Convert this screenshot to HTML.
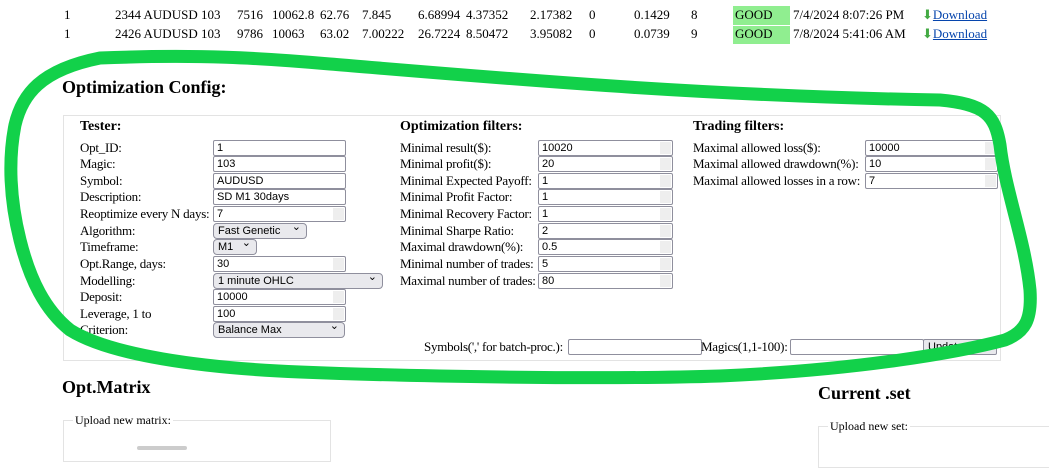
<!DOCTYPE html>
<html><head><meta charset="utf-8"><style>
body{margin:0;width:1049px;height:448px;overflow:hidden;background:#fff;font-family:"Liberation Serif",serif;font-size:13px;color:#000;position:relative}
.a{position:absolute;white-space:nowrap}
.t{position:absolute;white-space:nowrap;line-height:16px;letter-spacing:-0.25px}
.in{position:absolute;height:14px;border:1px solid #8f8f9d;border-radius:2px;font-family:"Liberation Sans",sans-serif;font-size:11px;line-height:14px;padding-left:3px;box-sizing:content-box;background:#fff}
.sp::after{content:"";position:absolute;right:1px;top:1px;width:11px;height:12px;background:#eee}
.sel{position:absolute;height:14px;border:1px solid #8f8f9d;border-radius:4px;background:#e9e9ed;font-family:"Liberation Sans",sans-serif;font-size:11px;line-height:14px;padding-left:4px}
.sel::after{content:"⌄";position:absolute;right:5px;top:-4px;font-size:11px}
h2{position:absolute;margin:0;font-size:18px;font-weight:bold}
b.h{position:absolute;font-size:14px}
.g{position:absolute;background:#90ee90}
a{color:#0645ad;text-decoration:underline}
.dl{color:#4a4;font-size:13px}
</style></head><body>
<div class="g" style="left:733px;top:6px;width:57px;height:19px"></div>
<div class="g" style="left:733px;top:26px;width:57px;height:18px"></div>
<div class="a" style="left:64px;top:7px">1</div><div class="a" style="left:115px;top:7px">2344 AUDUSD 103</div><div class="a" style="left:237px;top:7px">7516</div><div class="a" style="left:272px;top:7px">10062.8</div><div class="a" style="left:320px;top:7px">62.76</div><div class="a" style="left:362px;top:7px">7.845</div><div class="a" style="left:418px;top:7px">6.68994</div><div class="a" style="left:466px;top:7px">4.37352</div><div class="a" style="left:530px;top:7px">2.17382</div><div class="a" style="left:589px;top:7px">0</div><div class="a" style="left:634px;top:7px">0.1429</div><div class="a" style="left:691px;top:7px">8</div><div class="a" style="left:735px;top:7px">GOOD</div><div class="a" style="left:793px;top:7px">7/4/2024 8:07:26 PM</div><div class="a" style="left:922px;top:7px"><span class="dl">⬇</span><a>Download</a></div>
<div class="a" style="left:64px;top:26px">1</div><div class="a" style="left:115px;top:26px">2426 AUDUSD 103</div><div class="a" style="left:237px;top:26px">9786</div><div class="a" style="left:272px;top:26px">10063</div><div class="a" style="left:320px;top:26px">63.02</div><div class="a" style="left:362px;top:26px">7.00222</div><div class="a" style="left:418px;top:26px">26.7224</div><div class="a" style="left:466px;top:26px">8.50472</div><div class="a" style="left:530px;top:26px">3.95082</div><div class="a" style="left:589px;top:26px">0</div><div class="a" style="left:634px;top:26px">0.0739</div><div class="a" style="left:691px;top:26px">9</div><div class="a" style="left:735px;top:26px">GOOD</div><div class="a" style="left:793px;top:26px">7/8/2024 5:41:06 AM</div><div class="a" style="left:922px;top:26px"><span class="dl">⬇</span><a>Download</a></div>

<h2 style="left:62px;top:77px">Optimization Config:</h2>
<div style="position:absolute;left:63px;top:115px;width:936px;height:244px;border:1px solid #e3e3e3"></div>
<b class="h" style="left:80px;top:119px">Tester:</b>
<b class="h" style="left:400px;top:119px">Optimization filters:</b>
<b class="h" style="left:693px;top:119px">Trading filters:</b>

<div class="t" style="left:80px;top:140px">Opt_ID:</div><div class="in" style="left:213px;top:140px;width:128px">1</div>
<div class="t" style="left:80px;top:156px">Magic:</div><div class="in" style="left:213px;top:156px;width:128px">103</div>
<div class="t" style="left:80px;top:173px">Symbol:</div><div class="in" style="left:213px;top:173px;width:128px">AUDUSD</div>
<div class="t" style="left:80px;top:189px">Description:</div><div class="in" style="left:213px;top:189px;width:128px">SD M1 30days</div>
<div class="t" style="left:80px;top:206px">Reoptimize every N days:</div><div class="in sp" style="left:213px;top:206px;width:128px">7</div>
<div class="t" style="left:80px;top:223px">Algorithm:</div><div class="sel" style="left:213px;top:223px;width:88px">Fast Genetic</div>
<div class="t" style="left:80px;top:239px">Timeframe:</div><div class="sel" style="left:213px;top:239px;width:38px">M1</div>
<div class="t" style="left:80px;top:256px">Opt.Range, days:</div><div class="in sp" style="left:213px;top:256px;width:128px">30</div>
<div class="t" style="left:80px;top:273px">Modelling:</div><div class="sel" style="left:213px;top:273px;width:164px">1 minute OHLC</div>
<div class="t" style="left:80px;top:289px">Deposit:</div><div class="in sp" style="left:213px;top:289px;width:128px">10000</div>
<div class="t" style="left:80px;top:306px">Leverage, 1 to</div><div class="in sp" style="left:213px;top:306px;width:128px">100</div>
<div class="t" style="left:80px;top:322px">Criterion:</div><div class="sel" style="left:213px;top:322px;width:126px">Balance Max</div>

<div class="t" style="left:400px;top:140px">Minimal result($):</div><div class="in sp" style="left:538px;top:140px;width:130px">10020</div>
<div class="t" style="left:400px;top:156px">Minimal profit($):</div><div class="in sp" style="left:538px;top:156px;width:130px">20</div>
<div class="t" style="left:400px;top:173px">Minimal Expected Payoff:</div><div class="in sp" style="left:538px;top:173px;width:130px">1</div>
<div class="t" style="left:400px;top:189px">Minimal Profit Factor:</div><div class="in sp" style="left:538px;top:189px;width:130px">1</div>
<div class="t" style="left:400px;top:206px">Minimal Recovery Factor:</div><div class="in sp" style="left:538px;top:206px;width:130px">1</div>
<div class="t" style="left:400px;top:223px">Minimal Sharpe Ratio:</div><div class="in sp" style="left:538px;top:223px;width:130px">2</div>
<div class="t" style="left:400px;top:239px">Maximal drawdown(%):</div><div class="in sp" style="left:538px;top:239px;width:130px">0.5</div>
<div class="t" style="left:400px;top:256px">Minimal number of trades:</div><div class="in sp" style="left:538px;top:256px;width:130px">5</div>
<div class="t" style="left:400px;top:273px">Maximal number of trades:</div><div class="in sp" style="left:538px;top:273px;width:130px">80</div>

<div class="t" style="left:693px;top:140px">Maximal allowed loss($):</div><div class="in sp" style="left:865px;top:140px;width:128px">10000</div>
<div class="t" style="left:693px;top:156px">Maximal allowed drawdown(%):</div><div class="in sp" style="left:865px;top:156px;width:128px">10</div>
<div class="t" style="left:693px;top:173px">Maximal allowed losses in a row:</div><div class="in sp" style="left:865px;top:173px;width:128px">7</div>

<div class="t" style="left:424px;top:339px">Symbols(',' for batch-proc.):</div><div class="in" style="left:568px;top:339px;width:129px"></div>
<div class="t" style="left:701px;top:339px">Magics(1,1-100):</div><div class="in" style="left:790px;top:339px;width:129px"></div>
<div class="sel" style="left:923px;top:339px;width:68px;border-radius:2px">Update</div>

<h2 style="left:62px;top:377px">Opt.Matrix</h2>
<h2 style="left:818px;top:383px">Current .set</h2>
<div style="position:absolute;left:63px;top:420px;width:266px;height:40px;border:1px solid #e3e3e3"></div>
<div class="a" style="left:73px;top:413px;background:#fff;padding:0 2px;font-size:12px">Upload new matrix:</div>
<div style="position:absolute;left:137px;top:446px;width:50px;height:4px;background:#ccc;border-radius:2px"></div>
<div style="position:absolute;left:818px;top:426px;width:240px;height:40px;border:1px solid #e3e3e3"></div>
<div class="a" style="left:828px;top:419px;background:#fff;padding:0 2px;font-size:12px">Upload new set:</div>

<svg style="position:absolute;left:0;top:0" width="1049" height="448"><path d="M100,58 C200,54 260,58 330,64 C500,78 700,96 940,100 C985,104 995,115 1000,145 C1005,190 1025,240 1030,290 C1032,320 1025,332 1005,340 C960,352 860,370 720,376 C600,380 400,376 300,372 C200,368 110,355 70,330 C45,310 30,280 20,240 C10,200 8,160 15,125 C22,95 40,70 100,58 Z" fill="none" stroke="#12d14a" stroke-width="13" stroke-linejoin="round"/></svg>
</body></html>
